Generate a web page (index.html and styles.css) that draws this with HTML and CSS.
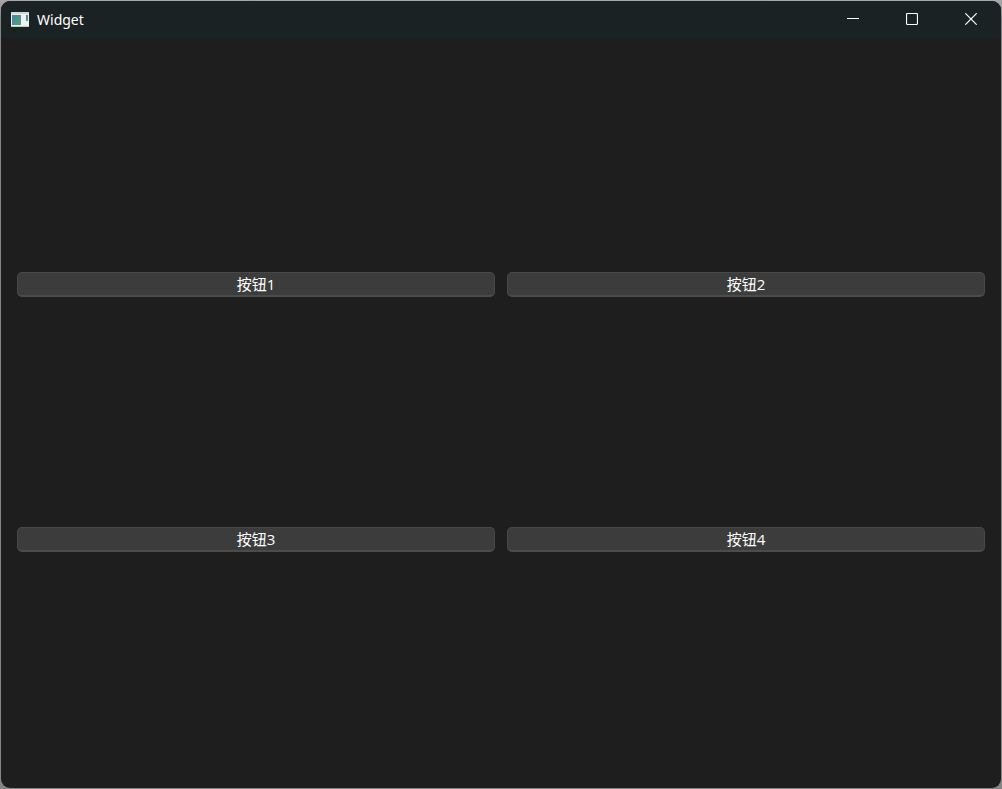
FILE: index.html
```html
<!DOCTYPE html>
<html lang="zh-CN">
<head>
<meta charset="utf-8">
<title>Widget</title>
<link rel="stylesheet" href="styles.css">
</head>
<body>
<div class="window">
  <header class="titlebar">
    <svg class="app-icon" width="18" height="15" viewBox="0 0 18 15" aria-hidden="true">
      <defs>
        <linearGradient id="pane" x1="0" y1="0" x2="1" y2="1">
          <stop offset="0" stop-color="#4a7fa5"/>
          <stop offset="1" stop-color="#50a878"/>
        </linearGradient>
      </defs>
      <rect width="18" height="15" fill="#f0f0f2"/>
      <rect width="18" height="2" fill="#d4d6da"/>
      <rect x="1" y="3" width="9" height="10" fill="url(#pane)"/>
      <rect x="15" y="3" width="2" height="6" fill="url(#pane)"/>
      <rect y="14" width="18" height="1" fill="#c8c8cc"/>
    </svg>
    <h1 class="title">Widget</h1>
    <div class="controls">
      <button class="control" type="button" aria-label="Minimize">
        <svg width="12" height="12" viewBox="0 0 12 12"><path d="M0 5.5H12"/></svg>
      </button>
      <button class="control" type="button" aria-label="Maximize">
        <svg width="12" height="12" viewBox="0 0 12 12"><rect x=".5" y=".5" width="11" height="11" rx="1.2"/></svg>
      </button>
      <button class="control" type="button" aria-label="Close">
        <svg width="12" height="12" viewBox="0 0 12 12"><path d="M.3 .3L11.7 11.7M11.7 .3L.3 11.7"/></svg>
      </button>
    </div>
  </header>
  <main class="content">
    <div class="row">
      <button class="push" type="button">按钮1</button>
      <button class="push" type="button">按钮2</button>
    </div>
    <div class="row">
      <button class="push" type="button">按钮3</button>
      <button class="push" type="button">按钮4</button>
    </div>
  </main>
</div>
</body>
</html>
```
FILE: styles.css
```css
* {
  box-sizing: border-box;
}

body {
  margin: 0;
  padding: 1px;
  min-height: 100vh;
  display: flex;
  background: linear-gradient(#a8a8a8, #858585 20px);
  color: #fff;
  font-family: "Noto Sans", "Noto Sans CJK SC", sans-serif;
}

.window {
  flex: 1;
  display: flex;
  flex-direction: column;
  border-radius: 9px;
  overflow: hidden;
  background: #1e1e1e;
}

.titlebar {
  display: flex;
  align-items: center;
  height: 37px;
  padding-left: 10px;
  background: #1b2224;
}

.title {
  flex: 1;
  margin: 0 0 0 8px;
  font-family: "Noto Sans", sans-serif;
  font-size: 14px;
  font-weight: 400;
  line-height: 20px;
}

.controls {
  display: flex;
  align-self: stretch;
  padding: 0 1px 2px 0;
}

.control {
  display: flex;
  align-items: center;
  justify-content: center;
  width: 59px;
  padding: 0;
  border: 0;
  background: transparent;
}

.control svg {
  fill: none;
  stroke: #fff;
  stroke-width: 1.2;
}

.content {
  flex: 1;
  display: flex;
  flex-direction: column;
  justify-content: space-evenly;
  padding: 4px 16px 6px;
}

.row {
  display: grid;
  grid-template-columns: 1fr 1fr;
  gap: 12px;
}

.push {
  height: 25px;
  padding: 0;
  border: 1px solid #484848;
  border-bottom: 2px solid #4c4c4c;
  border-radius: 5px;
  background: #3c3c3c;
  color: #fff;
  font-family: "Open Sans", "Noto Sans CJK SC", sans-serif;
  font-size: 15px;
  line-height: 20px;
}
```
